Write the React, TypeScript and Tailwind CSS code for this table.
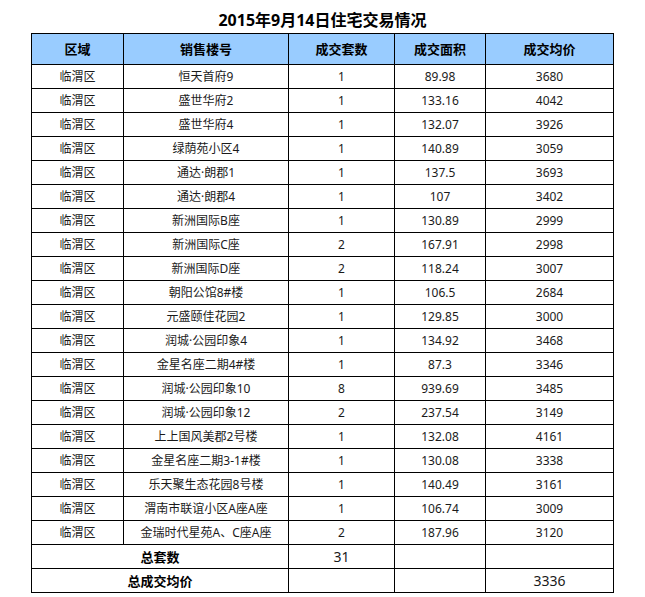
const rows: [string, string, string, string][] = [
  ["恒天首府9", "1", "89.98", "3680"],
  ["盛世华府2", "1", "133.16", "4042"],
  ["盛世华府4", "1", "132.07", "3926"],
  ["绿荫苑小区4", "1", "140.89", "3059"],
  ["通达·朗郡1", "1", "137.5", "3693"],
  ["通达·朗郡4", "1", "107", "3402"],
  ["新洲国际B座", "1", "130.89", "2999"],
  ["新洲国际C座", "2", "167.91", "2998"],
  ["新洲国际D座", "2", "118.24", "3007"],
  ["朝阳公馆8#楼", "1", "106.5", "2684"],
  ["元盛颐佳花园2", "1", "129.85", "3000"],
  ["润城·公园印象4", "1", "134.92", "3468"],
  ["金星名座二期4#楼", "1", "87.3", "3346"],
  ["润城·公园印象10", "8", "939.69", "3485"],
  ["润城·公园印象12", "2", "237.54", "3149"],
  ["上上国风美郡2号楼", "1", "132.08", "4161"],
  ["金星名座二期3-1#楼", "1", "130.08", "3338"],
  ["乐天聚生态花园8号楼", "1", "140.49", "3161"],
  ["渭南市联谊小区A座A座", "1", "106.74", "3009"],
  ["金瑞时代星苑A、C座A座", "2", "187.96", "3120"],
];

const cell = "border border-black text-center align-middle p-0";

export default function App() {
  return (
    <div
      className="w-[645px] h-[597px] bg-white pt-[8px] pl-[31px] text-[#1a1a1a]"
      style={{ fontFamily: '"Noto Sans", "Noto Sans CJK SC", sans-serif' }}
    >
      <h1 className="w-[583px] text-center text-[16px] font-bold leading-[25px] text-black">
        2015年9月14日住宅交易情况
      </h1>
      <table className="table-fixed border-collapse w-[583px] text-[12px] leading-[16px]">
        <colgroup>
          <col className="w-[92px]" />
          <col className="w-[165px]" />
          <col className="w-[106px]" />
          <col className="w-[91px]" />
          <col className="w-[128px]" />
        </colgroup>
        <thead>
          <tr className="h-[31px] bg-[#99ccff] text-[13px] font-bold text-black">
            <th className={cell}>区域</th>
            <th className={cell}>销售楼号</th>
            <th className={cell}>成交套数</th>
            <th className={cell}>成交面积</th>
            <th className={cell}>成交均价</th>
          </tr>
        </thead>
        <tbody>
          {rows.map(([name, count, area, price]) => (
            <tr key={name} className="h-[24px]">
              <td className={cell}>临渭区</td>
              <td className={cell}>{name}</td>
              <td className={cell}>{count}</td>
              <td className={cell}>{area}</td>
              <td className={cell}>{price}</td>
            </tr>
          ))}
          <tr className="h-[24px]">
            <td colSpan={2} className={`${cell} text-[13px] font-bold text-black`}>
              总套数
            </td>
            <td className={`${cell} text-[14px]`}>31</td>
            <td className={cell}></td>
            <td className={cell}></td>
          </tr>
          <tr className="h-[24px]">
            <td colSpan={2} className={`${cell} text-[13px] font-bold text-black`}>
              总成交均价
            </td>
            <td className={cell}></td>
            <td className={cell}></td>
            <td className={`${cell} text-[14px]`}>3336</td>
          </tr>
        </tbody>
      </table>
    </div>
  );
}
